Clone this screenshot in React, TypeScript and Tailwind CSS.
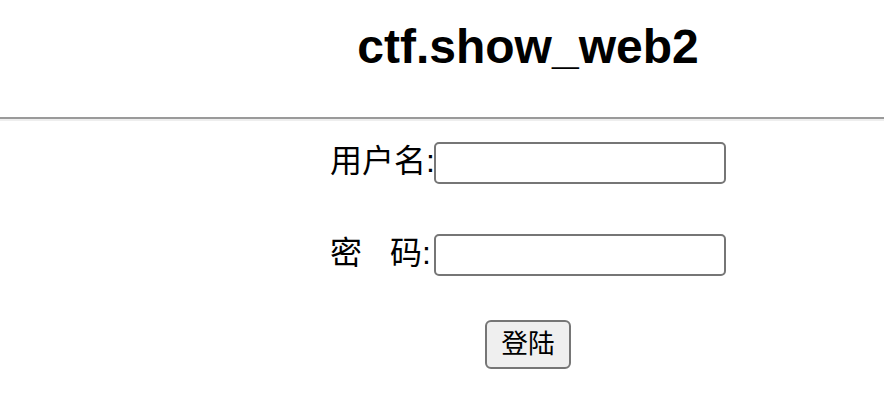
export default function App() {
  return (
    <div className="min-h-screen bg-white text-black font-['Liberation_Sans','Noto_Sans_CJK_SC',sans-serif]">
      {/* Titulo */}
      <div className="pl-[172px] pt-[19px] h-[117px]">
        <h2 className="text-[48px] font-bold leading-[55px] text-center">ctf.show_web2</h2>
      </div>
      <div className="w-full border-t-2 border-b-2 border-t-[#9a9a9a] border-b-[#eeeeee]" />

      <form className="pl-[172px] flex flex-col items-center" onSubmit={e => e.preventDefault()}>
        <div className="mt-[21px] flex items-center h-[42px]">
          <label className="w-[104px] shrink-0 whitespace-nowrap text-[32px] leading-[42px] -mt-[5px]">用户名:</label>
          <input
            type="text"
            className="w-[292px] shrink-0 h-[42px] border-2 border-[#767676] rounded-[5px] bg-white px-1 outline-none"
          />
        </div>
        <div className="mt-[50px] flex items-center h-[42px]">
          <label className="w-[104px] shrink-0 whitespace-nowrap text-[32px] leading-[42px] -mt-[5px]">
            密<span className="ml-[28px]">码</span>:
          </label>
          <input
            type="password"
            className="w-[292px] shrink-0 h-[42px] border-2 border-[#767676] rounded-[5px] bg-white px-1 outline-none"
          />
        </div>
        <button
          type="submit"
          className="mt-[44px] w-[86px] h-[49px] border-2 border-[#767676] rounded-[6px] bg-[#efefef] text-[26.67px] leading-none"
        >
          登陆
        </button>
      </form>
    </div>
  )
}
